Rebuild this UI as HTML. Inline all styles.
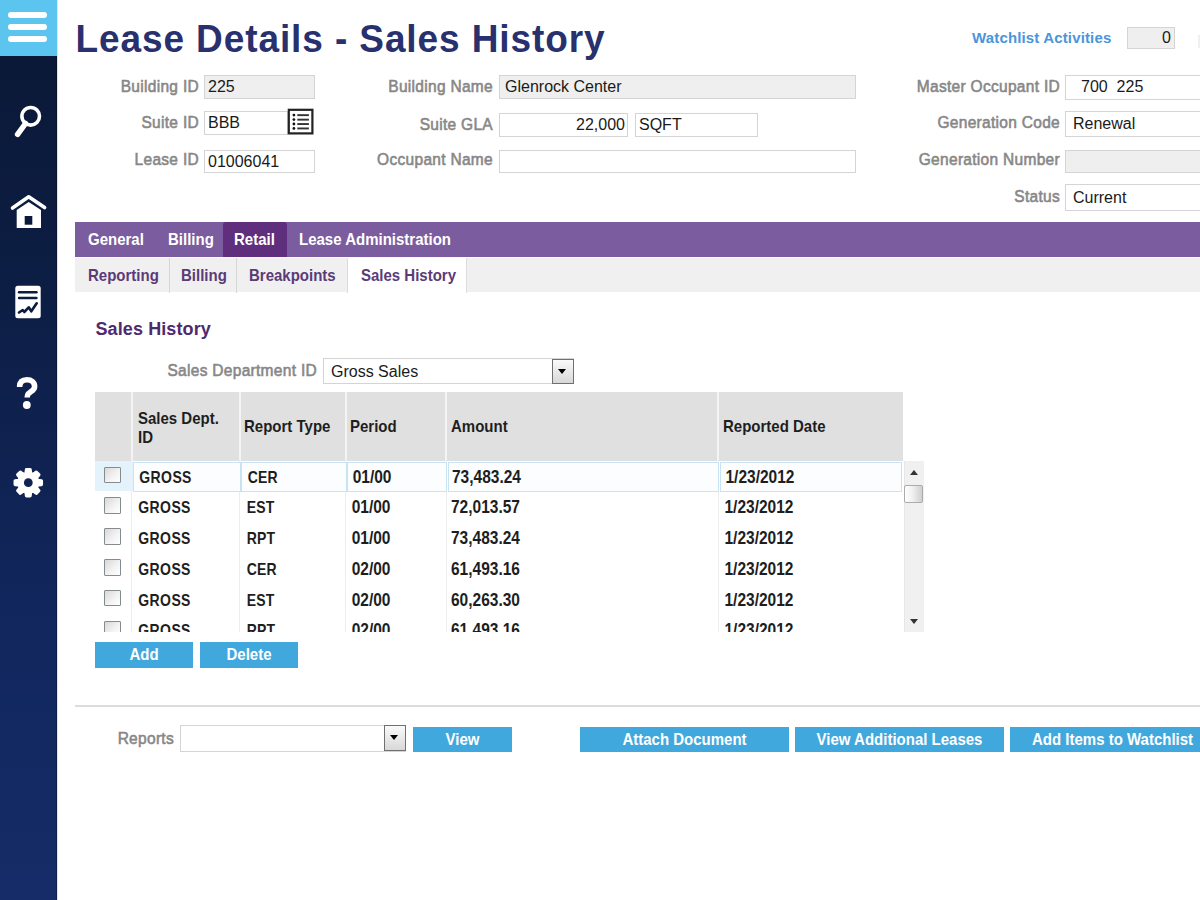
<!DOCTYPE html>
<html><head><meta charset="utf-8">
<style>
*{margin:0;padding:0;box-sizing:border-box}
html,body{width:1200px;height:900px;overflow:hidden;background:#fff;font-family:"Liberation Sans",sans-serif}
.a{position:absolute}
#side{left:0;top:0;width:57px;height:900px;background:linear-gradient(#0a1834 0px,#0d1e45 300px,#11265c 600px,#152c68 900px)}
#ham{left:0;top:0;width:57px;height:56px;background:#5bc5f0}
.hl{position:absolute;left:8px;width:39px;height:6px;border-radius:3px;background:#fff}
.title{left:75.5px;top:15.5px;font-size:37px;letter-spacing:0.9px;transform:scaleY(1.07);transform-origin:0 36.2px;font-weight:bold;color:#28306e;white-space:nowrap;line-height:48px}
.lbl{font-size:15.5px;letter-spacing:0.3px;transform:scaleY(1.08);transform-origin:0 14.1px;font-weight:normal;-webkit-text-stroke:0.55px #878787;color:#878787;text-align:right;white-space:nowrap;line-height:18px}
.inp{border:1px solid #d4d4d4;background:#fff;font-size:16px;color:#1a1a1a;padding-left:3px;line-height:22px;white-space:nowrap;overflow:hidden}
.ro{background:#efefef}
#tabs{left:75px;top:222px;width:1125px;height:35px;background:#7b5c9e}
.tab{position:absolute;top:0;height:35px;line-height:35px;font-size:15px;font-weight:bold;color:#fff;white-space:nowrap;transform:scaleY(1.12);transform-origin:0 22.5px}
#subtabs{left:75px;top:257px;width:1125px;height:35px;background:#f0f0f1;border-top:1px solid #fafafa}
.st{position:absolute;top:0;height:35px;line-height:36px;font-size:15px;font-weight:bold;color:#5a3b78;white-space:nowrap;transform:scaleY(1.12);transform-origin:0 23px}
.sep{position:absolute;top:0;width:1px;height:35px;background:#d6d6d6}
.btn{background:#40a8dd;color:#fff;font-size:15px;font-weight:bold;text-align:center;line-height:25px;white-space:nowrap}
.btn span{display:inline-block;transform:scaleY(1.12);transform-origin:0 17.5px}
.gh{font-size:15px;font-weight:bold;color:#1e1e1e;white-space:nowrap;line-height:19px;transform:scaleY(1.14);transform-origin:0 14.5px}
.cell{font-size:15px;font-weight:bold;color:#1e1e1e;white-space:nowrap;line-height:18px;transform:scaleY(1.15);transform-origin:0 14px}
.cb{width:16.5px;height:16.5px;border:1.6px solid #858c90;border-radius:1px;background:linear-gradient(135deg,#d8d8d8,#f4f4f4 60%,#fff);}
.dd{border:1px solid #707070;background:linear-gradient(#fafafa,#d8d8d8)}
.dd:after{content:"";position:absolute;left:5px;top:9px;border-left:4.5px solid transparent;border-right:4.5px solid transparent;border-top:5.5px solid #000}
</style></head><body>
<div id="side" class="a"></div>
<div class="a" style="left:56px;top:56px;width:1px;height:844px;background:rgba(0,0,0,0.25)"></div>
<div class="a" style="left:57px;top:0;width:1px;height:900px;background:#dfe3ee"></div>
<div id="ham" class="a">
  <div class="hl" style="top:12px"></div>
  <div class="hl" style="top:24px"></div>
  <div class="hl" style="top:36px"></div>
</div>
<svg class="a" style="left:0;top:90px" width="57" height="420" viewBox="0 90 57 420">
  <!-- search -->
  <circle cx="30.7" cy="116.3" r="8.8" fill="none" stroke="#fff" stroke-width="3.6"/>
  <line x1="25.5" y1="123.5" x2="17.6" y2="134.3" stroke="#fff" stroke-width="5.5" stroke-linecap="round"/>
  <!-- home -->
  <polyline points="12.5,208 28.7,196.8 44.6,207.6" fill="none" stroke="#fff" stroke-width="3.6" stroke-linecap="round" stroke-linejoin="round"/>
  <path d="M16.7 210 L28.7 202 L41 210 L41 228 L16.7 228 Z" fill="#fff"/>
  <rect x="24.7" y="216" width="7.6" height="8.7" fill="#0b1a3a"/>
  <!-- report -->
  <rect x="15.3" y="285.7" width="25.4" height="32.6" rx="2.5" fill="#fff"/>
  <line x1="19" y1="292.3" x2="36.5" y2="292.3" stroke="#0c1c40" stroke-width="2.4" stroke-linecap="round"/>
  <line x1="19" y1="298" x2="36.5" y2="298" stroke="#0c1c40" stroke-width="2.4" stroke-linecap="round"/>
  <polyline points="19,312.5 22.7,310 24.3,312 28.7,307.3 31.3,311.3 36.7,303.3" fill="none" stroke="#0c1c40" stroke-width="2.6" stroke-linecap="round" stroke-linejoin="round"/>
  <!-- question -->
  <path d="M19.6 387 C19.6 381.5 23 379.8 27 379.8 C31.5 379.8 34.6 382.4 34.6 386.4 C34.6 390.6 30.3 391.4 28.3 393.8 C27.4 394.9 27.2 396 27.2 397.5" fill="none" stroke="#fff" stroke-width="5.6" stroke-linecap="butt"/><circle cx="26.8" cy="405" r="3.9" fill="#fff"/>
  <!-- gear -->
  <g transform="translate(28.3 482.7)">
    <path fill="#fff" stroke="#fff" stroke-width="3.2" stroke-linejoin="round" d="M-2.32 -9.31 L-1.85 -13.17 L1.85 -13.17 L2.32 -9.31 L4.94 -8.23 L8.00 -10.62 L10.62 -8.00 L8.23 -4.94 L9.31 -2.32 L13.17 -1.85 L13.17 1.85 L9.31 2.32 L8.23 4.94 L10.62 8.00 L8.00 10.62 L4.94 8.23 L2.32 9.31 L1.85 13.17 L-1.85 13.17 L-2.32 9.31 L-4.94 8.23 L-8.00 10.62 L-10.62 8.00 L-8.23 4.94 L-9.31 2.32 L-13.17 1.85 L-13.17 -1.85 L-9.31 -2.32 L-8.23 -4.94 L-10.62 -8.00 L-8.00 -10.62 L-4.94 -8.23 Z"/><circle cx="0" cy="0" r="4.4" fill="#0f2252"/>
  </g>
</svg>

<div class="a title">Lease Details - Sales History</div>

<div class="a" style="left:972px;top:29px;font-size:15px;letter-spacing:0.15px;font-weight:bold;color:#4a95dc;white-space:nowrap;line-height:18px">Watchlist Activities</div>
<div class="a inp ro" style="left:1127px;top:27px;width:48px;height:22px;text-align:right;padding-right:3px;line-height:20px">0</div>
<div class="a" style="left:1198px;top:35px;width:2px;height:13px;background:#f0f0f0"></div>

<!-- column 1 -->
<div class="a lbl" style="right:1001px;top:78px">Building ID</div>
<div class="a inp ro" style="left:204px;top:75px;width:111px;height:24px">225</div>
<div class="a lbl" style="right:1001px;top:114px">Suite ID</div>
<div class="a inp" style="left:204px;top:111px;width:84px;height:24px">BBB</div>
<svg class="a" style="left:287px;top:108px" width="27" height="27" viewBox="0 0 27 27">
  <rect x="1.8" y="1.8" width="23.6" height="23.6" fill="#fff" stroke="#222" stroke-width="2.2"/>
  <circle cx="6.9" cy="7.1" r="1.4" fill="#111"/><circle cx="6.9" cy="11.6" r="1.4" fill="#111"/>
  <circle cx="6.9" cy="16" r="1.4" fill="#111"/><circle cx="6.9" cy="20.4" r="1.4" fill="#111"/>
  <rect x="10.3" y="6.2" width="11.6" height="1.9" fill="#333"/><rect x="10.3" y="10.7" width="11.6" height="1.9" fill="#333"/>
  <rect x="10.3" y="15.1" width="11.6" height="1.9" fill="#333"/><rect x="10.3" y="19.5" width="11.6" height="1.9" fill="#333"/>
</svg>
<div class="a lbl" style="right:1001px;top:151px">Lease ID</div>
<div class="a inp" style="left:204px;top:150px;width:111px;height:23px">01006041</div>

<!-- column 2 -->
<div class="a lbl" style="right:707px;top:78px">Building Name</div>
<div class="a inp ro" style="left:499px;top:75px;width:357px;height:24px;padding-left:5px">Glenrock Center</div>
<div class="a lbl" style="right:707px;top:116px">Suite GLA</div>
<div class="a inp" style="left:499px;top:113px;width:129px;height:24px;text-align:right;padding-right:2px">22,000</div>
<div class="a inp" style="left:635px;top:113px;width:123px;height:24px">SQFT</div>
<div class="a lbl" style="right:707px;top:151px">Occupant Name</div>
<div class="a inp" style="left:499px;top:150px;width:357px;height:23px"></div>

<!-- column 3 -->
<div class="a lbl" style="right:140px;top:78px">Master Occupant ID</div>
<div class="a inp" style="left:1065px;top:75px;width:200px;height:25px;padding-left:15px">700&nbsp;&nbsp;225</div>
<div class="a lbl" style="right:140px;top:114px">Generation Code</div>
<div class="a inp" style="left:1065px;top:111px;width:200px;height:26px;line-height:24px;padding-left:7px">Renewal</div>
<div class="a lbl" style="right:140px;top:151px">Generation Number</div>
<div class="a inp ro" style="left:1065px;top:150px;width:200px;height:23px"></div>
<div class="a lbl" style="right:140px;top:188px">Status</div>
<div class="a inp" style="left:1065px;top:184px;width:200px;height:27px;line-height:25px;padding-left:7px">Current</div>

<!-- tabs -->
<div id="tabs" class="a">
  <div class="tab" style="left:13px">General</div>
  <div class="tab" style="left:93px">Billing</div>
  <div style="position:absolute;left:147.5px;top:0;width:64px;height:35px;background:#5f2e7c;border-radius:3px 3px 0 0"></div>
  <div class="tab" style="left:159px">Retail</div>
  <div class="tab" style="left:224px">Lease Administration</div>
</div>
<div id="subtabs" class="a">
  <div class="st" style="left:13px">Reporting</div>
  <div class="sep" style="left:94px"></div>
  <div class="st" style="left:106px">Billing</div>
  <div class="sep" style="left:161px"></div>
  <div class="st" style="left:174px">Breakpoints</div>
  <div style="position:absolute;left:272px;top:0;width:120px;height:35px;background:#fff;border-left:1px solid #dcdcdc;border-right:1px solid #dcdcdc"></div>
  <div class="st" style="left:286px">Sales History</div>
</div>

<div class="a" style="left:95.5px;top:319px;font-size:18px;letter-spacing:0.1px;font-weight:bold;color:#4e2a6e;line-height:20px;white-space:nowrap">Sales History</div>

<div class="a lbl" style="right:883px;top:362px">Sales Department ID</div>
<div class="a inp" style="left:323px;top:358px;width:251px;height:26px;line-height:25px;padding-left:7px">Gross Sales</div>
<div class="a dd" style="left:552px;top:359px;width:22px;height:25px"></div>

<!-- grid -->
<!--GRID-->
<div id="grid" class="a" style="left:95px;top:392px;width:830px;height:240px;overflow:hidden">
<div class="a" style="left:0;top:0;width:808px;height:69px;background:#e0e0e0"></div>
<div class="a" style="left:35.7px;top:0;width:2px;height:69px;background:#f4f4f4"></div>
<div class="a" style="left:143.7px;top:0;width:2px;height:69px;background:#f4f4f4"></div>
<div class="a" style="left:249.8px;top:0;width:2px;height:69px;background:#f4f4f4"></div>
<div class="a" style="left:350.2px;top:0;width:2px;height:69px;background:#f4f4f4"></div>
<div class="a" style="left:622.4px;top:0;width:2px;height:69px;background:#f4f4f4"></div>
<div class="a gh" style="left:43.0px;top:17.0px;">Sales Dept.</div>
<div class="a gh" style="left:43.0px;top:35.7px;">ID</div>
<div class="a gh" style="left:149.0px;top:25.0px;">Report Type</div>
<div class="a gh" style="left:255.0px;top:25.0px;">Period</div>
<div class="a gh" style="left:356.0px;top:25.0px;">Amount</div>
<div class="a gh" style="left:628.0px;top:25.0px;">Reported Date</div>
<div class="a" style="left:36.2px;top:68px;width:1px;height:180px;background:#ededed"></div>
<div class="a" style="left:144.2px;top:68px;width:1px;height:180px;background:#ededed"></div>
<div class="a" style="left:250.2px;top:68px;width:1px;height:180px;background:#ededed"></div>
<div class="a" style="left:350.8px;top:68px;width:1px;height:180px;background:#ededed"></div>
<div class="a" style="left:622.9px;top:68px;width:1px;height:180px;background:#ededed"></div>
<div class="a" style="left:0;top:69px;width:38px;height:30px;background:#e3f2fb"></div>
<div class="a" style="left:38.0px;top:70.0px;width:107.5px;height:29.5px;border:1.5px solid #c8e3f1;background:#fbfdfe"></div>
<div class="a" style="left:146.0px;top:70.0px;width:105.5px;height:29.5px;border:1.5px solid #c8e3f1;background:#fbfdfe"></div>
<div class="a" style="left:252.0px;top:70.0px;width:100.2px;height:29.5px;border:1.5px solid #c8e3f1;background:#fbfdfe"></div>
<div class="a" style="left:353.0px;top:70.0px;width:271.2px;height:29.5px;border:1.5px solid #c8e3f1;background:#fbfdfe"></div>
<div class="a" style="left:625.0px;top:70.0px;width:182.0px;height:29.5px;border:1.5px solid #c8e3f1;background:#fbfdfe"></div>
<div class="a cb" style="left:9.0px;top:74.7px"></div>
<div class="a cell" style="left:44.3px;top:76.6px;font-size:14px;letter-spacing:0.4px">GROSS</div>
<div class="a cell" style="left:152.7px;top:76.6px;font-size:14px;letter-spacing:0.2px">CER</div>
<div class="a cell" style="left:257.7px;top:76.6px;font-size:15.5px">01/00</div>
<div class="a cell" style="left:357.0px;top:76.6px;font-size:15.5px">73,483.24</div>
<div class="a cell" style="left:630.5px;top:76.6px;font-size:15.5px">1/23/2012</div>
<div class="a cb" style="left:9.0px;top:105.4px"></div>
<div class="a cell" style="left:43.3px;top:107.4px;font-size:14px;letter-spacing:0.4px">GROSS</div>
<div class="a cell" style="left:151.7px;top:107.4px;font-size:14px;letter-spacing:0.2px">EST</div>
<div class="a cell" style="left:256.7px;top:107.4px;font-size:15.5px">01/00</div>
<div class="a cell" style="left:356.0px;top:107.4px;font-size:15.5px">72,013.57</div>
<div class="a cell" style="left:629.5px;top:107.4px;font-size:15.5px">1/23/2012</div>
<div class="a cb" style="left:9.0px;top:136.2px"></div>
<div class="a cell" style="left:43.3px;top:138.1px;font-size:14px;letter-spacing:0.4px">GROSS</div>
<div class="a cell" style="left:151.7px;top:138.1px;font-size:14px;letter-spacing:0.2px">RPT</div>
<div class="a cell" style="left:256.7px;top:138.1px;font-size:15.5px">01/00</div>
<div class="a cell" style="left:356.0px;top:138.1px;font-size:15.5px">73,483.24</div>
<div class="a cell" style="left:629.5px;top:138.1px;font-size:15.5px">1/23/2012</div>
<div class="a cb" style="left:9.0px;top:167.0px"></div>
<div class="a cell" style="left:43.3px;top:168.9px;font-size:14px;letter-spacing:0.4px">GROSS</div>
<div class="a cell" style="left:151.7px;top:168.9px;font-size:14px;letter-spacing:0.2px">CER</div>
<div class="a cell" style="left:256.7px;top:168.9px;font-size:15.5px">02/00</div>
<div class="a cell" style="left:356.0px;top:168.9px;font-size:15.5px">61,493.16</div>
<div class="a cell" style="left:629.5px;top:168.9px;font-size:15.5px">1/23/2012</div>
<div class="a cb" style="left:9.0px;top:197.7px"></div>
<div class="a cell" style="left:43.3px;top:199.6px;font-size:14px;letter-spacing:0.4px">GROSS</div>
<div class="a cell" style="left:151.7px;top:199.6px;font-size:14px;letter-spacing:0.2px">EST</div>
<div class="a cell" style="left:256.7px;top:199.6px;font-size:15.5px">02/00</div>
<div class="a cell" style="left:356.0px;top:199.6px;font-size:15.5px">60,263.30</div>
<div class="a cell" style="left:629.5px;top:199.6px;font-size:15.5px">1/23/2012</div>
<div class="a cb" style="left:9.0px;top:228.5px"></div>
<div class="a cell" style="left:43.3px;top:230.4px;font-size:14px;letter-spacing:0.4px">GROSS</div>
<div class="a cell" style="left:151.7px;top:230.4px;font-size:14px;letter-spacing:0.2px">RPT</div>
<div class="a cell" style="left:256.7px;top:230.4px;font-size:15.5px">02/00</div>
<div class="a cell" style="left:356.0px;top:230.4px;font-size:15.5px">61,493.16</div>
<div class="a cell" style="left:629.5px;top:230.4px;font-size:15.5px">1/23/2012</div>
<div class="a" style="left:809px;top:69.3px;width:20px;height:171px;background:#f0f0f0;border-left:1px solid #e6e6e6"></div>
<div class="a" style="left:815px;top:78.3px;width:0;height:0;border-left:4.5px solid transparent;border-right:4.5px solid transparent;border-bottom:5px solid #333"></div>
<div class="a" style="left:809.3px;top:93.3px;width:18.4px;height:18px;border:1.5px solid #ababab;border-radius:2px;background:linear-gradient(90deg,#fdfdfd,#f2f2f2 40%,#cfcfcf)"></div>
<div class="a" style="left:815px;top:227.0px;width:0;height:0;border-left:4.5px solid transparent;border-right:4.5px solid transparent;border-top:5px solid #333"></div>
</div>
<!--/GRID-->

<div class="a btn" style="left:95px;top:642px;width:98px;height:26px"><span>Add</span></div>
<div class="a btn" style="left:200px;top:642px;width:98px;height:26px"><span>Delete</span></div>

<div class="a" style="left:75px;top:705px;width:1125px;height:1.5px;background:#dcdcdc"></div>

<div class="a lbl" style="right:1026px;top:730px">Reports</div>
<div class="a inp" style="left:180px;top:725px;width:226px;height:27px"></div>
<div class="a dd" style="left:384px;top:725px;width:22px;height:26px"></div>
<div class="a btn" style="left:413px;top:727px;width:99px;height:25px"><span>View</span></div>
<div class="a btn" style="left:580px;top:727px;width:209px;height:25px"><span>Attach Document</span></div>
<div class="a btn" style="left:795px;top:727px;width:209px;height:25px"><span>View Additional Leases</span></div>
<div class="a btn" style="left:1010px;top:727px;width:200px;height:25px;text-align:left;padding-left:22px"><span>Add Items to Watchlist</span></div>
</body></html>
